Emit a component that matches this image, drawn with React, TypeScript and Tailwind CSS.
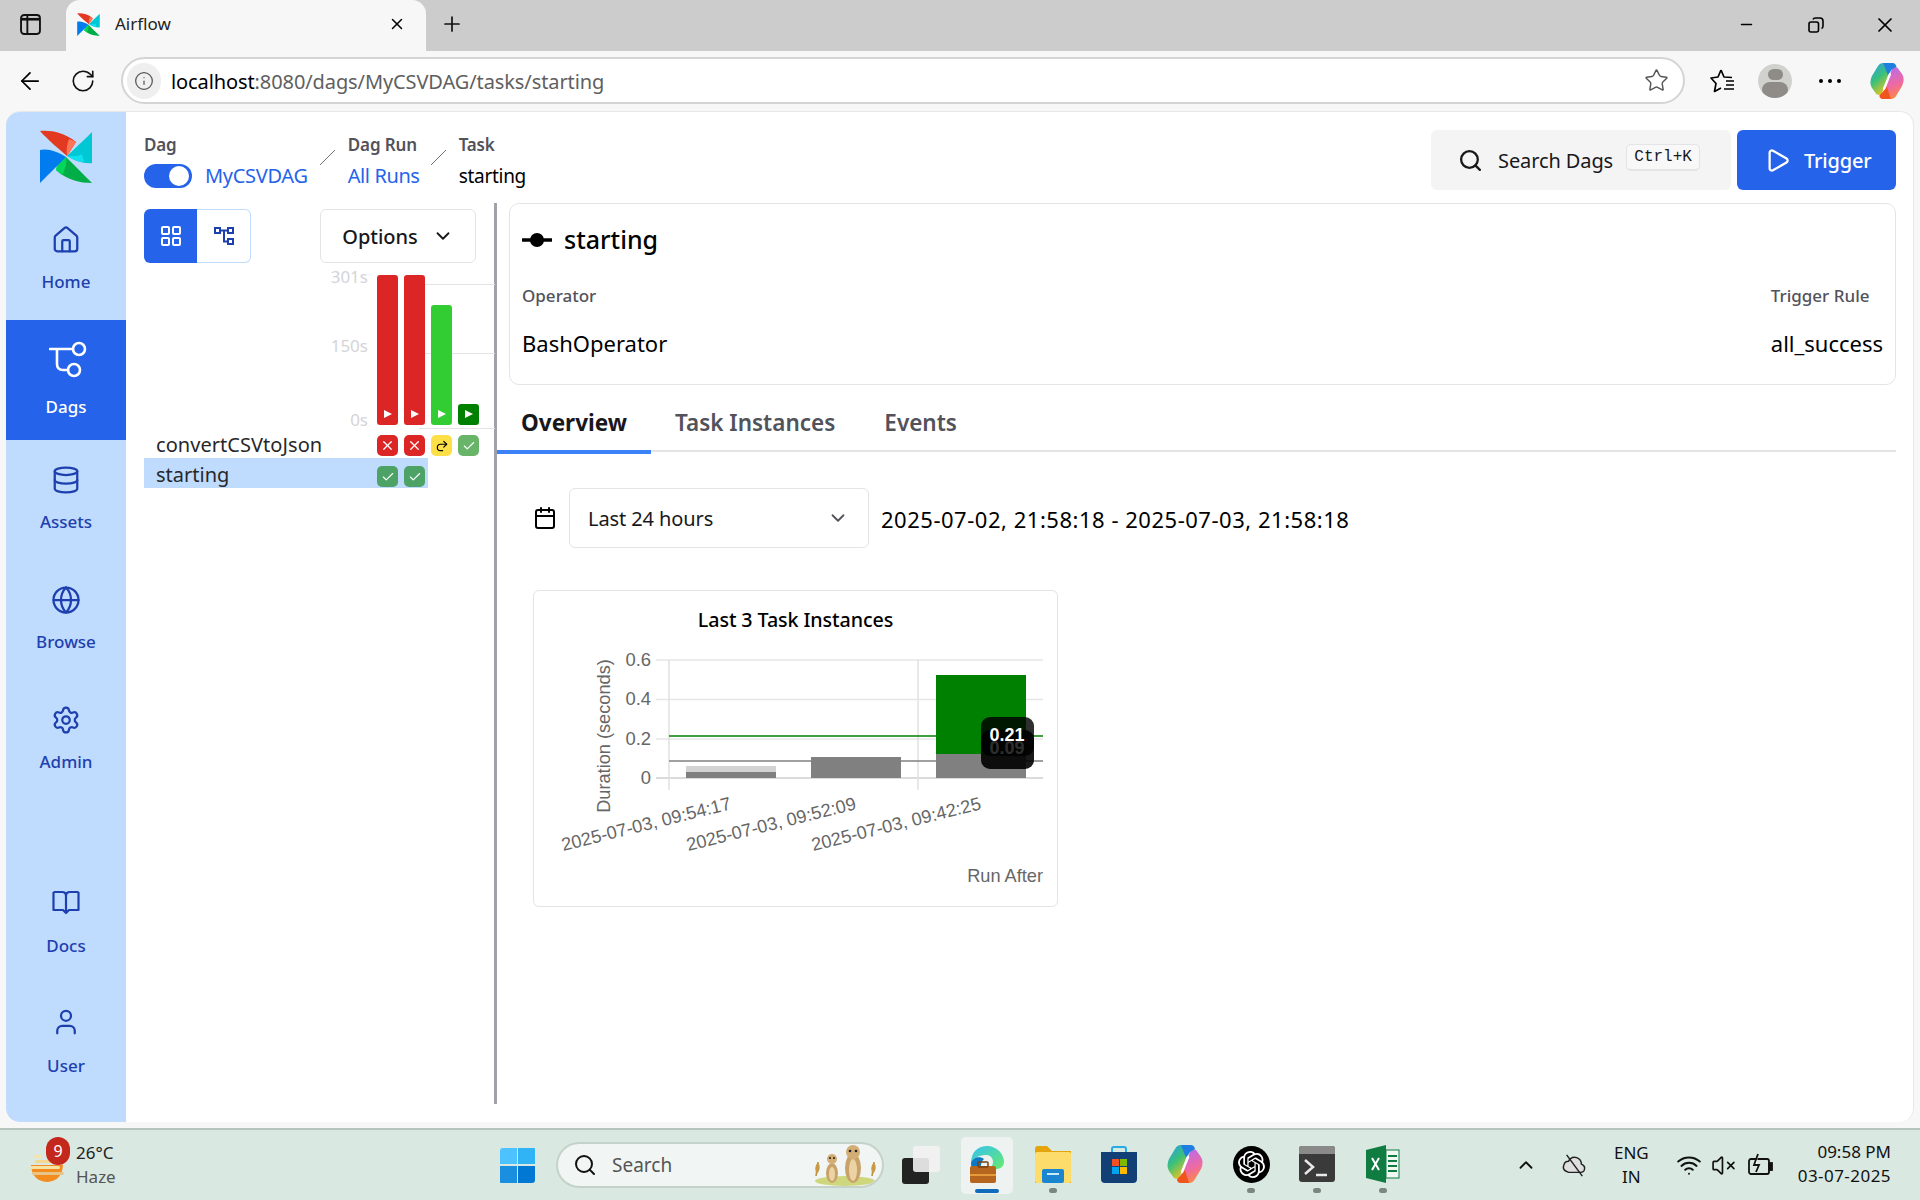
import React from 'react';
import { ArrowLeft, RotateCw, Info, Star, X, Plus, Minus, Home, Database, Globe, Settings, User, LayoutGrid, ChevronDown, Search, Play, Calendar, Check, Undo2, ChevronUp, VolumeX, Wifi } from 'lucide-react';
import { SiOpenai } from 'react-icons/si';

function Pinwheel({ className }: { className: string }) {
  return (
    <svg viewBox="0 0 52 53" className={className}>
      <path d="M0 1C10 0 24 2 36 12L27 26C20 20 8 10 0 1Z" fill="#e43921" />
      <path d="M29 9C32 10 34 11 36 12L27 26C26 20 27 14 29 9Z" fill="#ff7557" />
      <path d="M52 2V33C44 34 35 31 27 26C33 20 42 12 52 2Z" fill="#00c7d4" />
      <path d="M44 32C38 32 32 29 27 26C32 26 38 27 42 24Z" fill="#11e1ee" />
      <path d="M52 53C40 53 27 50 16 40L26 27C34 35 44 45 52 53Z" fill="#00ad46" />
      <path d="M16 40C16 36 19 30 26 27C27 31 26 38 22 45Z" fill="#04d659" />
      <path d="M0 53V20C8 18 18 22 26 27C20 33 10 43 0 53Z" fill="#017cee" />
    </svg>
  );
}

function DagsIcon() {
  return (
    <svg viewBox="0 0 40 38" className="w-[40px] h-[38px] ml-[5px]" fill="none" stroke="white" strokeWidth="2.6">
      <path d="M1 8H24M8 8V23Q8 29 14 29H19" strokeLinecap="round" />
      <circle cx="30" cy="8" r="6" />
      <circle cx="25" cy="29" r="6" />
    </svg>
  );
}

function DocsIcon() {
  return (
    <svg viewBox="0 0 28 25" className="w-[28px] h-[25px]" fill="none" stroke="#1e40af" strokeWidth="2.2" strokeLinejoin="round">
      <path d="M1.5 2H10Q14 2 14 6V22M26.5 2H18Q14 2 14 6M1.5 2V20H11L14 23L17 20H26.5V2" />
    </svg>
  );
}

function GraphIcon() {
  return (
    <svg viewBox="0 0 20 18" className="w-[20px] h-[18px]" fill="none" stroke="#1e40af" strokeWidth="2">
      <rect x="1" y="1" width="5" height="5" />
      <rect x="14" y="1" width="5" height="5" />
      <rect x="14" y="12" width="5" height="5" />
      <path d="M6 3.5H14M10 3.5V14.5H14" />
    </svg>
  );
}

function NavItem({ icon, label, active, low }: { icon: React.ReactNode; label: string; active?: boolean; low?: boolean }) {
  return (
    <div className={`h-[120px] flex flex-col items-center ${active ? 'bg-[#2563eb] text-white pt-[21px]' : 'text-[#1e40af] pt-[26px]'}`}>
      <div className={`flex items-center justify-center ${active ? 'h-[38px]' : 'h-[28px]'}`}>{icon}</div>
      <span className={`font-medium text-[17px] leading-[24px] ${low ? 'mt-[18px]' : 'mt-[16px]'}`}>{label}</span>
    </div>
  );
}

function Bar({ color, h }: { color: string; h: string }) {
  return (
    <div className={`w-[21px] rounded-[3px] flex items-end justify-center pb-[7px] ${color} ${h}`}>
      <svg viewBox="0 0 8 8" className="w-[8px] h-[8px]"><path d="M0 0L8 4L0 8Z" fill="white" /></svg>
    </div>
  );
}

function Cell({ color, children }: { color: string; children?: React.ReactNode }) {
  return <div className={`w-[21px] h-[21px] rounded-[5px] flex items-center justify-center ${color}`}>{children}</div>;
}

function TaskChart() {
  const lx = [
    { x: 732, y: 809, t: '2025-07-03, 09:54:17' },
    { x: 857, y: 809, t: '2025-07-03, 09:52:09' },
    { x: 982, y: 809, t: '2025-07-03, 09:42:25' },
  ];
  return (
    <svg viewBox="534 591 525 318" className="w-[525px] h-[318px] absolute left-0 top-0 font-['Liberation_Sans',sans-serif]">
      {[660, 699.5, 739, 778].map((y) => (
        <line key={y} x1="656" x2="1043" y1={y} y2={y} stroke={y === 778 ? '#cfcfcf' : '#e6e6e6'} strokeWidth="1.5" />
      ))}
      <line x1="669" x2="669" y1="660" y2="790" stroke="#e0e0e0" strokeWidth="1.5" />
      <line x1="918" x2="918" y1="660" y2="790" stroke="#e0e0e0" strokeWidth="1.5" />
      {[['0.6', 666], ['0.4', 705], ['0.2', 745], ['0', 784]].map(([t, y]) => (
        <text key={t} x="651" y={y} textAnchor="end" fontSize="18.4" fill="#666">{t}</text>
      ))}
      <text transform="translate(610 736) rotate(-90)" textAnchor="middle" fontSize="18.2" fill="#666">Duration (seconds)</text>
      <rect x="686" y="766" width="90" height="12" fill="#d3d3d3" />
      <rect x="686" y="772" width="90" height="6" fill="#808080" />
      <rect x="811" y="757" width="90" height="21" fill="#808080" />
      <rect x="936" y="675" width="90" height="79" fill="#008000" />
      <rect x="936" y="754" width="90" height="24" fill="#808080" />
      <line x1="669" x2="1043" y1="736" y2="736" stroke="#008000" strokeWidth="1.5" />
      <line x1="669" x2="1043" y1="761" y2="761" stroke="#808080" strokeWidth="1.5" />
      {lx.map((l) => (
        <text key={l.t} transform={`translate(${l.x} ${l.y}) rotate(-14)`} textAnchor="end" fontSize="18.2" fill="#666">{l.t}</text>
      ))}
      <text x="1043" y="882" textAnchor="end" fontSize="18.2" fill="#666">Run After</text>
      <rect x="981" y="730" width="53" height="39" rx="9" fill="#000" fillOpacity="0.9" />
      <text x="1007" y="754" textAnchor="middle" fontSize="18" fontWeight="700" fill="#fff">0.09</text>
      <rect x="981" y="717" width="53" height="39" rx="9" fill="#000" fillOpacity="0.82" />
      <text x="1007" y="741" textAnchor="middle" fontSize="18" fontWeight="700" fill="white">0.21</text>
    </svg>
  );
}

function Copilot({ className }: { className: string }) {
  return (
    <svg viewBox="0 0 36 40" className={className}>
      <defs>
        <linearGradient id="cpA" x1="0" y1="0" x2="0.6" y2="1">
          <stop offset="0" stopColor="#2a9df4" />
          <stop offset="0.5" stopColor="#39c07a" />
          <stop offset="1" stopColor="#f5c518" />
        </linearGradient>
        <linearGradient id="cpB" x1="0.3" y1="0" x2="0.6" y2="1">
          <stop offset="0" stopColor="#b56bf0" />
          <stop offset="0.6" stopColor="#f06aa0" />
          <stop offset="1" stopColor="#fb8a3c" />
        </linearGradient>
      </defs>
      <path d="M14 1H24L13 32Q11 36 7 34L2 27Q-1 22 2 15L8 5Q10 1 14 1Z" fill="url(#cpA)" />
      <path d="M22 39H12L23 8Q25 4 29 6L34 13Q37 18 34 25L28 35Q26 39 22 39Z" fill="url(#cpB)" />
      <path d="M14 1H24Q27 1 28 5L23 8L19 14Z" fill="#1f7fe0" />
      <path d="M22 39H14Q10 39 10 35L13 32L18 26Z" fill="#f0551e" />
      <path d="M21 13L15 28" stroke="white" strokeWidth="2.5" strokeLinecap="round" />
    </svg>
  );
}

function TaskbarApp({ children, dot, active }: { children: React.ReactNode; dot?: boolean; active?: boolean }) {
  return (
    <div className={`w-[52px] h-[57px] flex flex-col items-center justify-between pt-[9px] pb-[1px] rounded-[5px] ${active ? 'bg-[#eef3f1]' : ''}`}>
      <div className="h-[37px] flex items-center justify-center">{children}</div>
      {active ? <div className="w-[24px] h-[4px] rounded-full bg-[#0f6cbd]" /> : dot ? <div className="w-[8px] h-[5px] rounded-full bg-[#7c8681]" /> : <div className="h-[4px]" />}
    </div>
  );
}

export default function App() {
  return (
    <div className="w-[1920px] h-[1200px] overflow-hidden bg-[#f7f7f7] text-[#18181b] font-['Noto_Sans',sans-serif] flex flex-col">
      {/* browser tabs */}
      <div className="h-[51px] bg-[#cccccc] flex items-end shrink-0">
        <div className="w-[66px] h-[51px] flex items-center justify-center pb-[2px] pr-[6px]">
          <svg viewBox="0 0 20 20" className="w-[21px] h-[21px]" fill="none" stroke="#111" strokeWidth="1.8">
            <rect x="1" y="1" width="18" height="18" rx="3" />
            <path d="M7 1V19" />
            <path d="M1 5H19" strokeWidth="2.5" />
          </svg>
        </div>
        <div className="w-[360px] h-[51px] rounded-t-[14px] bg-[#f7f7f7] flex items-center pl-[11px] pr-[20px] pb-[3px]">
          <Pinwheel className="w-[23px] h-[23px]" />
          <span className="ml-[15px] text-[17px] text-[#222] flex-1">Airflow</span>
          <X size={18} strokeWidth={2} className="text-black" />
        </div>
        <div className="h-[51px] flex items-center ml-[14px] pb-[3px]">
          <Plus size={24} strokeWidth={1.7} className="text-[#111]" />
        </div>
        <div className="flex-1" />
        <div className="h-[51px] flex items-center pb-[2px] pr-[23px]">
          <Minus size={17} strokeWidth={2.2} className="text-black" />
          <svg viewBox="0 0 16 16" className="w-[16px] h-[16px] ml-[53px]" fill="none" stroke="black" strokeWidth="1.6">
            <rect x="1" y="5" width="9.5" height="10" rx="2" />
            <path d="M5 2.5Q5.5 1 7.5 1H12Q15 1 15 4V9Q15 11 13.5 11.5" />
          </svg>
          <X size={24} strokeWidth={1.7} className="text-black ml-[49px]" />
        </div>
      </div>

      {/* browser toolbar */}
      <div className="h-[60px] shrink-0 flex items-center pb-[1px]">
        <div className="w-[121px] flex items-center pl-[16px] gap-[26px]">
          <ArrowLeft size={28} strokeWidth={1.5} className="text-black" />
          <RotateCw size={26} strokeWidth={1.5} className="text-[#111]" />
        </div>
        <div className="w-[1564px] h-[47px] rounded-full bg-white border-2 border-[#d4d4d4] flex items-center pl-[4px] pr-[14px]">
          <div className="w-[34px] h-[36px] rounded-full bg-[#efefef] flex items-center justify-center">
            <Info size={20} strokeWidth={1.5} className="text-[#555]" />
          </div>
          <div className="ml-[10px] pt-[2px] text-[20px] flex-1 tracking-[-0.1px]">
            <span className="text-black">localhost</span>
            <span className="text-[#5f5f5f]">:8080/dags/MyCSVDAG/tasks/starting</span>
          </div>
          <Star size={25} strokeWidth={1.4} className="text-[#555]" />
        </div>
        <div className="flex-1 flex items-center pl-[25px]">
          <svg viewBox="0 0 26 26" className="w-[26px] h-[26px]" fill="none" stroke="black" strokeWidth="1.7" strokeLinejoin="round">
            <path d="M11 2L14 9L22 9.5M11 2L8 9L1 10L6 15.5L4.5 23.5L11 20" />
            <path d="M16 13H24M16 17H24M14 21H24" />
          </svg>
          <div className="ml-[22px] w-[34px] h-[34px] rounded-full bg-[#d1d1cd] flex flex-col items-center overflow-hidden pt-[5px]">
            <div className="w-[15px] h-[15px] rounded-full bg-[#8f8c88]" />
            <div className="w-[26px] h-[20px] rounded-full bg-[#8f8c88] mt-[2px]" />
          </div>
          <div className="ml-[27px] flex gap-[5px]">
            <div className="w-[4px] h-[4px] rounded-full bg-black" />
            <div className="w-[4px] h-[4px] rounded-full bg-black" />
            <div className="w-[4px] h-[4px] rounded-full bg-black" />
          </div>
          <Copilot className="ml-[28px] w-[36px] h-[38px]" />
        </div>
      </div>

      {/* airflow page */}
      <div className="h-[1011px] shrink-0 ml-[6px] mr-[6px] bg-white rounded-[14px] border-t border-r border-[#e8e8e8] flex overflow-hidden">
        <div className="w-[120px] shrink-0 bg-[#bfdbfe] flex flex-col justify-between pb-[20px]">
          <div className="flex flex-col">
            <div className="h-[88px] flex justify-center pt-[18px]">
              <Pinwheel className="w-[52px] h-[53px]" />
            </div>
            <NavItem label="Home" icon={<Home size={30} strokeWidth={1.8} />} />
            <NavItem label="Dags" active icon={<DagsIcon />} />
            <NavItem label="Assets" icon={<Database size={30} strokeWidth={1.8} />} />
            <NavItem label="Browse" icon={<Globe size={30} strokeWidth={1.8} />} />
            <NavItem label="Admin" icon={<Settings size={30} strokeWidth={1.8} />} />
          </div>
          <div className="flex flex-col">
            <NavItem label="Docs" low icon={<DocsIcon />} />
            <NavItem label="User" low icon={<User size={30} strokeWidth={1.8} />} />
          </div>
        </div>

        <div className="flex-1 flex flex-col pt-[18px] pr-[17px]">
          {/* breadcrumb + search */}
          <div className="h-[60px] flex justify-between pl-[18px] shrink-0">
            <div className="flex pt-[3px]">
              <div className="flex flex-col">
                <span className="text-[17px] leading-[24px] font-semibold text-[#52525b] tracking-[-0.2px]">Dag</span>
                <div className="flex items-center mt-[5px]">
                  <div className="w-[48px] h-[24px] rounded-full bg-[#2563eb] flex items-center justify-end pr-[3px]">
                    <div className="w-[20px] h-[20px] rounded-full bg-white" />
                  </div>
                  <span className="ml-[13px] text-[20px] leading-[28px] text-[#2563eb] tracking-[-0.3px]">MyCSVDAG</span>
                </div>
              </div>
              <div className="w-[40px] flex justify-center pt-[17px]">
                <svg viewBox="0 0 15 15" className="w-[15px] h-[15px]"><line x1="0" y1="15" x2="15" y2="0" stroke="#71717a" /></svg>
              </div>
              <div className="flex flex-col w-[72px] whitespace-nowrap">
                <span className="text-[17px] leading-[24px] font-semibold text-[#52525b] tracking-[-0.1px]">Dag Run</span>
                <span className="mt-[5px] text-[20px] leading-[28px] text-[#2563eb] tracking-[-0.4px]">All Runs</span>
              </div>
              <div className="w-[38px] flex justify-center pt-[17px]">
                <svg viewBox="0 0 15 15" className="w-[15px] h-[15px]"><line x1="0" y1="15" x2="15" y2="0" stroke="#71717a" /></svg>
              </div>
              <div className="flex flex-col ml-[1px]">
                <span className="text-[17px] leading-[24px] font-semibold text-[#52525b] tracking-[-0.2px]">Task</span>
                <span className="mt-[5px] text-[19px] leading-[28px] text-black tracking-[-0.3px]">starting</span>
              </div>
            </div>
            <div className="flex gap-[6px]">
              <div className="w-[300px] h-[60px] rounded-[6px] bg-[#f4f4f5] flex items-center pl-[27px]">
                <Search size={25} strokeWidth={2.2} className="text-[#18181b]" />
                <span className="ml-[15px] pt-[2px] text-[20px] tracking-[-0.1px]">Search Dags</span>
                <span className="ml-[13px] h-[27px] w-[74px] rounded-[5px] bg-[#f8f8f8] border border-[#e4e4e7] border-b-2 flex items-center justify-center font-['Liberation_Mono',monospace] text-[16px] mb-[5px]">Ctrl+K</span>
              </div>
              <div className="w-[159px] h-[60px] rounded-[6px] bg-[#2563eb] text-white flex items-center pl-[27px]">
                <Play size={27} strokeWidth={2} />
                <span className="ml-[13px] pt-[1px] text-[20px] font-medium tracking-[-0.2px]">Trigger</span>
              </div>
            </div>
          </div>

          <div className="flex flex-1 mt-[13px] mb-[18px] min-h-0">
            {/* grid panel */}
            <div className="w-[368px] shrink-0 pl-[18px] pt-[6px]">
              <div className="flex justify-between pr-[18px]">
                <div className="flex h-[54px]">
                  <div className="w-[53px] rounded-l-[6px] bg-[#2563eb] flex items-center justify-center">
                    <LayoutGrid size={24} strokeWidth={2} className="text-white" />
                  </div>
                  <div className="w-[54px] rounded-r-[6px] border border-l-0 border-[#bfdbfe] flex items-center justify-center">
                    <GraphIcon />
                  </div>
                </div>
                <div className="w-[156px] h-[54px] rounded-[6px] border border-[#e4e4e7] flex items-center justify-center gap-[14px] font-medium">
                  <span className="pt-[2px] text-[20px] tracking-[-0.05px]">Options</span>
                  <ChevronDown size={22} strokeWidth={2} />
                </div>
              </div>
              <div className="relative mt-[12px] h-[150px] flex pl-[224px]">
                <div className="absolute left-[275px] right-[-1px] top-[9px] h-px bg-[#e4e4e7]" />
                <div className="absolute left-[275px] right-[-1px] top-[78px] h-px bg-[#e4e4e7]" />
                <div className="absolute left-[275px] right-[-1px] top-[153px] h-px bg-[#e4e4e7]" />
                <div className="absolute left-[130px] w-[94px] top-[-10px] h-[167px] flex flex-col justify-between items-end text-[17px] text-[#d4d4d8] leading-[24px]">
                  <span>301s</span>
                  <span className="mb-[6px]">150s</span>
                  <span>0s</span>
                </div>
                <div className="relative ml-[9px] flex items-end gap-[6px] h-[150px]">
                  <Bar color="bg-[#dc2626]" h="h-[150px]" />
                  <Bar color="bg-[#dc2626]" h="h-[150px]" />
                  <Bar color="bg-[#32cd32]" h="h-[120px]" />
                  <Bar color="bg-[#008000]" h="h-[21px]" />
                </div>
              </div>
              <div className="mt-[10px] h-[23px] flex items-start">
                <span className="w-[233px] pl-[12px] text-[20px] leading-[20px] tracking-[0.05px] text-[#27272a]">convertCSVtoJson</span>
                <div className="flex gap-[6px]">
                  <Cell color="bg-[#dc2626]"><X size={15} strokeWidth={2} className="text-white" /></Cell>
                  <Cell color="bg-[#dc2626]"><X size={15} strokeWidth={2} className="text-white" /></Cell>
                  <Cell color="bg-[#fde047]"><Undo2 size={14} strokeWidth={2} className="text-black -scale-x-100" /></Cell>
                  <Cell color="bg-[#68b468]"><Check size={14} strokeWidth={2} className="text-white" /></Cell>
                </div>
              </div>
              <div className="w-[284px] h-[30px] bg-[#bfdbfe] flex items-center">
                <span className="w-[233px] pl-[12px] pt-[4px] text-[20px] leading-[22px] text-[#27272a]">starting</span>
                <div className="flex gap-[6px] pt-[7px]">
                  <Cell color="bg-[#4da266]"><Check size={14} strokeWidth={2} className="text-white" /></Cell>
                  <Cell color="bg-[#4da266]"><Check size={14} strokeWidth={2} className="text-white" /></Cell>
                </div>
              </div>
            </div>

            <div className="w-[3px] shrink-0 bg-[#a1a1aa]" />

            {/* details panel */}
            <div className="flex-1 flex flex-col">
              <div className="ml-[12px] h-[182px] rounded-[10px] border border-[#e4e4e7] px-[12px] pt-[15px] shrink-0">
                <div className="flex items-center">
                  <svg viewBox="0 0 30 14" className="w-[30px] h-[14px] mt-[2px]">
                    <line x1="0" x2="30" y1="7" y2="7" stroke="black" strokeWidth="3.5" />
                    <circle cx="15" cy="7" r="7" fill="black" />
                  </svg>
                  <span className="ml-[12px] text-[25px] leading-[40px] font-medium text-black">starting</span>
                </div>
                <div className="flex justify-between mt-[25px]">
                  <div className="flex flex-col">
                    <span className="text-[17px] leading-[24px] font-medium text-[#52525b]">Operator</span>
                    <span className="text-[22px] leading-[32px] mt-[19px] text-black">BashOperator</span>
                  </div>
                  <div className="flex flex-col">
                    <span className="text-[17px] leading-[24px] font-medium text-[#52525b]">Trigger Rule</span>
                    <span className="text-[22px] leading-[32px] mt-[19px] text-black">all_success</span>
                  </div>
                </div>
              </div>

              <div className="h-[67px] border-b-2 border-[#e4e4e7] flex shrink-0">
                <div className="w-[154px] h-[69px] border-b-4 border-[#3b82f6] pl-[24px] pt-[21px] text-[22.5px] leading-[34px] font-bold text-[#18181b] whitespace-nowrap">Overview</div>
                <div className="ml-[24px] pt-[21px] text-[22.5px] leading-[34px] font-semibold text-[#52525b]">Task Instances</div>
                <div className="ml-[49px] pt-[21px] text-[22.5px] leading-[34px] font-semibold text-[#52525b]">Events</div>
              </div>

              <div className="flex items-center mt-[36px] pl-[36px] shrink-0">
                <Calendar size={24} strokeWidth={2} className="text-black" />
                <div className="ml-[12px] w-[300px] h-[60px] rounded-[6px] border border-[#e4e4e7] flex items-center justify-between pl-[18px] pr-[19px]">
                  <span className="pt-[2px] text-[20px] tracking-[-0.1px]">Last 24 hours</span>
                  <ChevronDown size={22} strokeWidth={2} className="text-[#52525b]" />
                </div>
                <span className="ml-[12px] pt-[2px] text-[22px] tracking-[0.52px] text-black">2025-07-02, 21:58:18 - 2025-07-03, 21:58:18</span>
              </div>

              <div className="relative ml-[36px] mt-[42px] w-[525px] h-[317px] rounded-[6px] border border-[#e4e4e7] shrink-0">
                <TaskChart />
                <div className="relative text-center pt-[14px] text-[19.7px] leading-[30px] font-medium text-black tracking-[-0.1px]">Last 3 Task Instances</div>
              </div>
            </div>
          </div>
        </div>
      </div>

      {/* taskbar */}
      <div className="mt-[6px] flex-1 border-t-2 border-[#b6c4bc] bg-[#d9e8e1] flex items-center relative">
        <div className="w-[500px] shrink-0 flex items-center pl-[29px] h-full">
          <div className="relative w-[47px] h-[50px]">
            <svg viewBox="0 0 36 30" className="w-[36px] h-[30px] absolute left-0 top-[13px]">
              <path d="M2 12H34Q33 28 18 29Q3 28 2 12Z" fill="#f28c1e" />
              <rect x="5" y="2" width="8" height="3" rx="1.5" fill="#f6e3a6" />
              <rect x="6" y="7" width="20" height="3" rx="1.5" fill="#f2d98f" />
              <rect x="1" y="13" width="30" height="3" rx="1.5" fill="#f6e3a6" />
              <rect x="3" y="19" width="32" height="3" rx="1.5" fill="#e8c584" />
            </svg>
            <div className="absolute left-[17px] top-[-3px] w-[24px] h-[28px] rounded-full bg-[#c4281c] text-white text-[16px] leading-[28px] text-center">9</div>
          </div>
          <div className="flex flex-col text-[17px] leading-[24px] mt-[-1px]">
            <span className="text-[#222]">26°C</span>
            <span className="text-[#555]">Haze</span>
          </div>
        </div>
        <div className="w-[35px] h-[35px] grid grid-cols-2 gap-[1.5px] shrink-0">
          <div className="bg-[#4cc2ff] rounded-tl-[3px]" />
          <div className="bg-[#30b4f5] rounded-tr-[1px]" />
          <div className="bg-[#1a8fe0] rounded-bl-[1px]" />
          <div className="bg-[#0078d4] rounded-br-[3px]" />
        </div>
        <div className="ml-[21px] w-[328px] h-[46px] rounded-full bg-[#f1f6f4] border-2 border-[#c4d2ca] flex items-center pl-[15px] overflow-hidden shrink-0">
          <Search size={24} strokeWidth={2} className="text-[#111]" />
          <span className="ml-[15px] text-[19px] text-[#555] flex-1">Search</span>
          <svg viewBox="0 0 68 42" className="w-[68px] h-[42px] mr-[4px]">
            <ellipse cx="35" cy="37" rx="30" ry="5" fill="#cfd77e" />
            <path d="M6 32L8 18M62 32L64 18" stroke="#b8893b" strokeWidth="1.5" fill="none" />
            <path d="M8 18Q3 24 7 30Q12 24 8 18ZM64 18Q59 24 63 30Q68 24 64 18Z" fill="#c99a45" />
            <ellipse cx="22" cy="29" rx="6" ry="10" fill="#c9a269" />
            <ellipse cx="22" cy="30" rx="3" ry="7" fill="#ecd3a5" />
            <circle cx="22" cy="15" r="5" fill="#d4ad75" />
            <circle cx="20" cy="14" r="1" fill="#222" />
            <circle cx="24" cy="14" r="1" fill="#222" />
            <ellipse cx="43" cy="24" rx="8" ry="15" fill="#c9a269" />
            <ellipse cx="43" cy="26" rx="4" ry="11" fill="#ecd3a5" />
            <circle cx="43" cy="8" r="7" fill="#d4ad75" />
            <circle cx="40" cy="7" r="1.3" fill="#222" />
            <circle cx="46" cy="7" r="1.3" fill="#222" />
          </svg>
        </div>
        <div className="ml-[18px] relative w-[38px] h-[38px] shrink-0">
          <div className="absolute left-0 bottom-0 w-[27px] h-[26px] rounded-[3px] bg-[#222]" />
          <div className="absolute right-0 top-0 w-[27px] h-[26px] rounded-[3px] bg-[#f2f2f2]/90" />
        </div>
        <div className="ml-[21px] flex items-center gap-[14px] shrink-0">
          <TaskbarApp active>
            <svg viewBox="0 0 36 38" className="w-[36px] h-[38px]">
              <defs>
                <linearGradient id="edgeA" x1="0" y1="0" x2="1" y2="1">
                  <stop offset="0" stopColor="#35c1f1" />
                  <stop offset="1" stopColor="#66eb6e" />
                </linearGradient>
              </defs>
              <path d="M2 18C2 6 10 1 18 1C28 1 35 9 35 17C35 24 26 26 22 22C26 18 24 10 17 10C9 10 4 14 2 18Z" fill="url(#edgeA)" />
              <path d="M2 18C4 12 11 11 15 14C10 18 11 28 18 30L18 36C8 36 2 28 2 18Z" fill="#0c78c6" />
              <rect x="1" y="21" width="26" height="17" rx="2" fill="#b5651d" />
              <rect x="9" y="17" width="10" height="5" rx="1" fill="none" stroke="#7a4010" strokeWidth="1.5" />
              <rect x="1" y="29" width="26" height="2" fill="#e59b3a" />
            </svg>
          </TaskbarApp>
          <TaskbarApp dot>
            <svg viewBox="0 0 36 37" className="w-[36px] h-[37px]">
              <path d="M0 3Q0 0 3 0H12L17 5H36V37H0Z" fill="#e5a50a" />
              <rect x="0" y="6" width="36" height="31" rx="2" fill="#fcdc6a" />
              <rect x="7" y="23" width="22" height="14" rx="2" fill="#1a86d0" />
              <rect x="12" y="27" width="12" height="2" fill="#cbe8fb" />
            </svg>
          </TaskbarApp>
          <TaskbarApp>
            <svg viewBox="0 0 36 37" className="w-[36px] h-[37px]">
              <path d="M11 8V3Q11 1 13 1H23Q25 1 25 3V8" fill="none" stroke="#27a9e6" strokeWidth="2" />
              <path d="M0 6H36V33Q36 37 32 37H4Q0 37 0 33Z" fill="#123f75" />
              <rect x="11" y="13" width="7" height="7" fill="#f25022" />
              <rect x="19" y="13" width="7" height="7" fill="#7fba00" />
              <rect x="11" y="21" width="7" height="7" fill="#00a4ef" />
              <rect x="19" y="21" width="7" height="7" fill="#ffb900" />
            </svg>
          </TaskbarApp>
          <TaskbarApp>
            <Copilot className="w-[36px] h-[40px]" />
          </TaskbarApp>
          <TaskbarApp dot>
            <div className="w-[37px] h-[37px] rounded-full bg-black flex items-center justify-center">
              <SiOpenai size={27} className="text-white" />
            </div>
          </TaskbarApp>
          <TaskbarApp dot>
            <div className="w-[36px] h-[36px] rounded-[3px] bg-[#3a3a3a] overflow-hidden relative">
              <div className="h-[8px] bg-[#8a8a8a]" />
              <svg viewBox="0 0 36 28" className="w-[36px] h-[28px]" fill="none" stroke="#e8e8e8" strokeWidth="2.5">
                <path d="M6 6L14 13L6 20" />
                <path d="M17 21H28" />
              </svg>
            </div>
          </TaskbarApp>
          <TaskbarApp dot>
            <svg viewBox="0 0 34 38" className="w-[34px] h-[38px]">
              <path d="M0 5L20 0V38L0 33Z" fill="#107c41" />
              <rect x="20" y="5" width="13" height="28" fill="#f2f8f4" stroke="#107c41" />
              <path d="M22 11H31M22 16H31M22 21H31M22 26H31" stroke="#107c41" strokeWidth="2" />
              <path d="M6 13L13 25M13 13L6 25" stroke="white" strokeWidth="2" />
            </svg>
          </TaskbarApp>
        </div>
        <div className="flex-1" />
        <div className="flex items-center pr-[29px] shrink-0">
          <ChevronUp size={22} strokeWidth={2} className="text-[#111]" />
          <svg viewBox="0 0 28 26" className="ml-[24px] w-[26px] h-[24px]" fill="#dfdfdf" stroke="#222" strokeWidth="1.6">
            <path d="M6 20Q1 18 3 13Q4 9 8 9Q11 3 17 5Q22 7 22 12Q27 14 25 19Q24 21 21 21H8Z" />
            <path d="M6 2L23 25" />
          </svg>
          <div className="ml-[27px] flex flex-col items-center text-[17px] leading-[24px] text-[#111]">
            <span>ENG</span>
            <span>IN</span>
          </div>
          <Wifi size={26} strokeWidth={1.8} className="ml-[27px] text-[#111]" />
          <VolumeX size={25} strokeWidth={1.6} className="ml-[9px] text-[#111]" />
          <svg viewBox="0 0 26 24" className="ml-[12px] w-[26px] h-[24px]" fill="none" stroke="#111" strokeWidth="1.8">
            <rect x="1" y="6" width="20" height="15" rx="2" />
            <rect x="21" y="10" width="3" height="7" fill="#111" />
            <path d="M10 1L6 12H11L8 19" fill="white" />
          </svg>
          <div className="ml-[24px] flex flex-col items-end text-[17px] leading-[24px] text-[#111] mt-[-2px]">
            <span>09:58 PM</span>
            <span className="tracking-[0.45px]">03-07-2025</span>
          </div>
        </div>
      </div>
    </div>
  );
}
